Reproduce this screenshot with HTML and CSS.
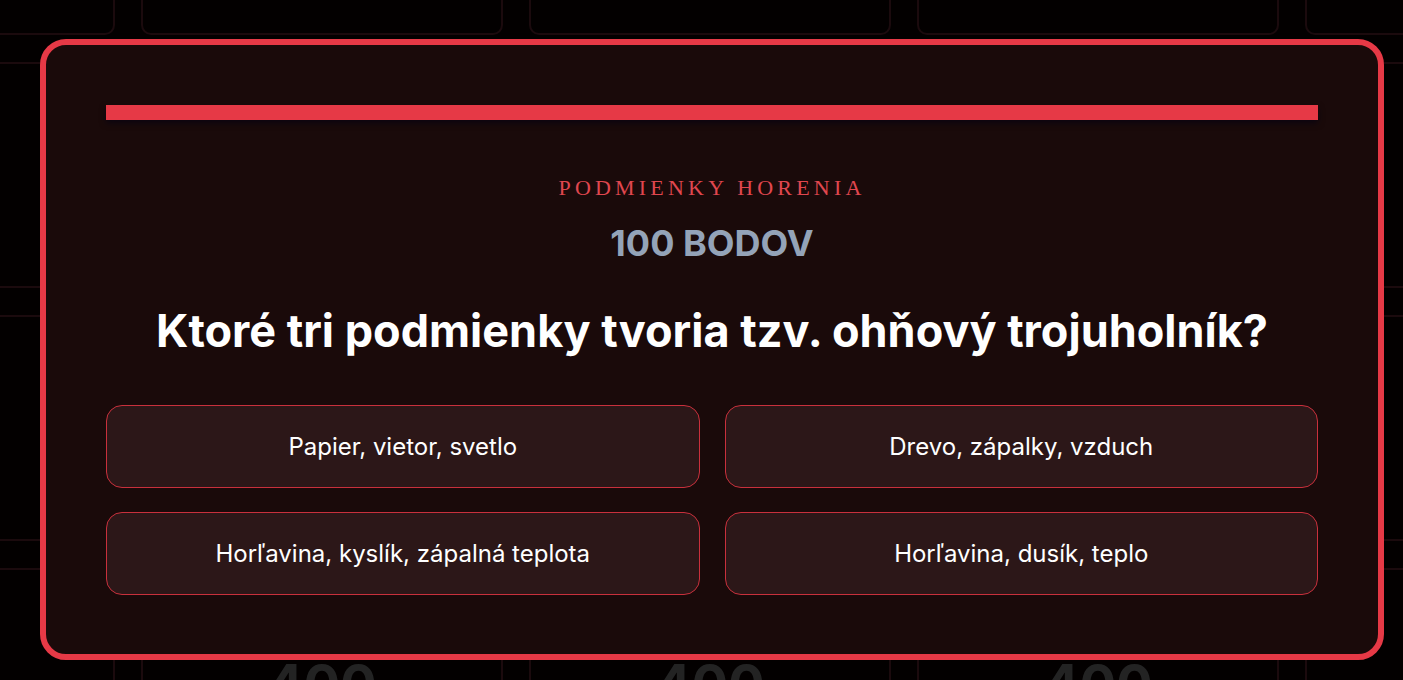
FILE: index.html
```html
<!DOCTYPE html>
<html lang="sk">
<head>
<meta charset="utf-8">
<title>Otázka</title>
<link rel="stylesheet" href="styles.css">
</head>
<body>
<div class="board">
  <div class="card"></div><div class="card"></div><div class="card"></div><div class="card"></div><div class="card"></div>
  <div class="card"></div><div class="card"></div><div class="card"></div><div class="card"></div><div class="card"></div>
  <div class="card"></div><div class="card"></div><div class="card"></div><div class="card"></div><div class="card"></div>
  <div class="card"><span class="val">400</span></div><div class="card"><span class="val">400</span></div><div class="card"><span class="val">400</span></div><div class="card"><span class="val">400</span></div><div class="card"><span class="val">400</span></div>
</div>

<div class="modal">
  <div class="bar"></div>
  <div class="category">Podmienky horenia</div>
  <div class="points">100 BODOV</div>
  <h1 class="question">Ktoré tri podmienky tvoria tzv. ohňový trojuholník?</h1>
  <div class="options">
    <div class="option">Papier, vietor, svetlo</div>
    <div class="option">Drevo, zápalky, vzduch</div>
    <div class="option">Horľavina, kyslík, zápalná teplota</div>
    <div class="option">Horľavina, dusík, teplo</div>
  </div>
</div>
</body>
</html>
```
FILE: styles.css
```css
* { box-sizing: border-box; }
html, body {
  margin: 0;
  padding: 0;
  height: 100%;
  overflow: hidden;
  background: #030000;
  font-family: Inter, "Noto Sans", sans-serif;
}
.board {
  display: grid;
  grid-template-columns: repeat(5, 362px);
  grid-auto-rows: 226px;
  column-gap: 26px;
  row-gap: 27px;
  margin-left: -247px;
  margin-top: -191px;
  width: 1914px;
}
.card {
  border: 2px solid #1b0a0d;
  border-radius: 10px;
  background: #030000;
  display: flex;
  align-items: center;
  justify-content: center;
}
.val {
  font-size: 54px;
  font-weight: 700;
  color: #232323;
  padding-top: 4px;
}
.modal {
  position: fixed;
  left: 40px;
  top: 39px;
  width: 1344px;
  height: 621px;
  border: 6px solid #e63946;
  border-radius: 26px;
  background: #1a0a0a;
  padding: 60px;
  display: flex;
  flex-direction: column;
  align-items: stretch;
}
.bar {
  height: 15px;
  background: #e63946;
  box-shadow: 0 3px 6px rgba(0, 0, 20, 0.6);
  flex: none;
}
.category {
  margin-top: 55px;
  text-align: center;
  font-family: "Liberation Serif", "DejaVu Serif", serif;
  text-transform: uppercase;
  font-size: 22px;
  letter-spacing: 4.2px;
  color: #e0474f;
  line-height: 26px;
}
.points {
  margin-top: 20px;
  text-align: center;
  font-size: 36px;
  font-weight: 700;
  color: #94a3b8;
  line-height: 44px;
}
.question {
  margin: 39px 0 0;
  text-align: center;
  font-size: 45px;
  font-weight: 700;
  color: #ffffff;
  line-height: 54px;
}
.options {
  margin-top: 47px;
  display: grid;
  grid-template-columns: 1fr 1fr;
  column-gap: 25px;
  row-gap: 24px;
}
.option {
  height: 83px;
  display: flex;
  align-items: center;
  justify-content: center;
  background: #2c1718;
  border: 1px solid #c9303c;
  border-radius: 16px;
  color: #ffffff;
  font-size: 24px;
}
```
